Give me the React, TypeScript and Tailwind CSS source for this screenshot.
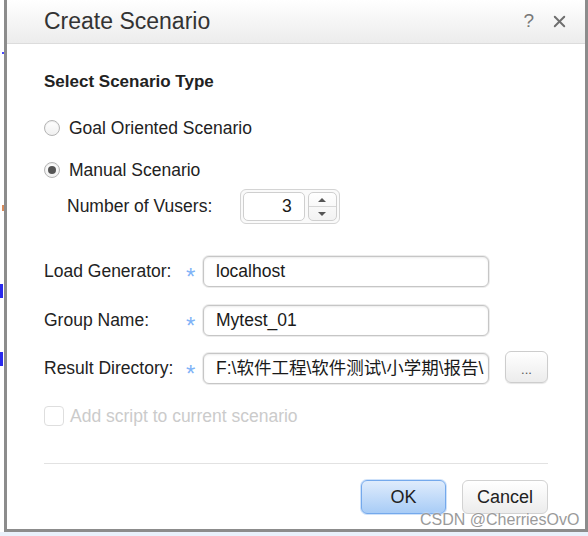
import { X } from "lucide-react";

const font = "font-['Liberation_Sans','Noto_Sans_CJK_SC',Arial,sans-serif]";

function Radio({ checked, label }: { checked?: boolean; label: string }) {
  return (
    <div className="flex h-6 items-center">
      <span className="flex h-[16px] w-[16px] shrink-0 items-center justify-center rounded-full border border-[#b4b4b4] bg-gradient-to-b from-white to-[#f0f0f0] shadow-[inset_0_1px_1px_rgba(0,0,0,0.08)]">
        {checked && <span className="h-[8px] w-[8px] rounded-full bg-[#555]" />}
      </span>
      <span className="ml-[9px] text-[17.5px] text-[#222]">{label}</span>
    </div>
  );
}

function Field({ label, children }: { label: string; children: React.ReactNode }) {
  return (
    <div className="flex h-[31px] items-center">
      <span className="w-[142px] shrink-0 text-[17.5px] text-[#222]">{label}</span>
      <span className="mt-[10px] w-[17px] shrink-0 text-[24px] leading-none text-[#7fb3f7]">*</span>
      <div className="flex h-[31px] w-[286px] shrink-0 items-center overflow-hidden whitespace-nowrap rounded-[6px] border border-[#c6c6c6] bg-white pl-[12px] text-[17.5px] text-[#1a1a1a] shadow-[inset_0_1px_2px_rgba(0,0,0,0.08),0_0_0_1px_#ececec]">
        {children}
      </div>
    </div>
  );
}

export default function App() {
  return (
    <div className={`relative flex h-[536px] w-[588px] flex-col bg-white ${font}`}>
      <div className="flex h-[532px]">
        {/* left page margin with bits of the page behind */}
        <div className="relative w-[4px]">
          <span className="absolute left-[2px] top-[52px] h-[2px] w-[2px] bg-[#4b4bff]" />
          <span className="absolute left-0 top-[284px] h-[14px] w-[3px] bg-[#2a2aee]" />
          <span className="absolute left-0 top-[352px] h-[14px] w-[3px] bg-[#2a2aee]" />
          <span className="absolute left-[2px] top-[205px] h-[6px] w-[2px] bg-[#d98a5a]" />
        </div>

        <div className="flex w-[584px] flex-col border-x-[3px] border-b-[3px] border-[#8c8c8c]">
          {/* title bar */}
          <div className="flex h-[44px] shrink-0 items-center border-b border-[#dcdcdc] bg-gradient-to-b from-white to-[#ececec] pl-[37px] pr-[16px]">
            <span className="text-[23px] text-[#333]">Create Scenario</span>
            <span className="ml-auto text-[19px] text-[#777]">?</span>
            <X className="ml-[16px] h-[19px] w-[19px] text-[#6e6e6e]" strokeWidth={2.4} />
          </div>

          <div className="flex flex-1 flex-col pl-[37px] pr-[37px]">
            <div className="mt-[28px] h-[20px] text-[17px] font-bold leading-[20px] text-[#222]">
              Select Scenario Type
            </div>

            <div className="mt-[24px]">
              <Radio label="Goal Oriented Scenario" />
            </div>
            <div className="mt-[18px]">
              <Radio checked label="Manual Scenario" />
            </div>

            <div className="mt-[7px] flex h-[35px] items-center pl-[23px]">
              <span className="w-[173px] shrink-0 text-[17.5px] text-[#222]">Number of Vusers:</span>
              <div className="flex h-[35px] w-[100px] shrink-0 items-center gap-[3px] rounded-[6px] border border-[#d4d4d4] bg-[#fafafa] p-[2px]">
                <div className="flex h-full w-[63px] items-center justify-end rounded-[5px] border border-[#cfcfcf] bg-white pr-[12px] text-[17.5px] text-[#1a1a1a]">
                  3
                </div>
                <div className="flex h-full w-[30px] flex-col overflow-hidden rounded-[5px] border border-[#cfcfcf] bg-gradient-to-b from-white to-[#f2f2f2]">
                  <div className="flex flex-1 items-center justify-center border-b border-[#d6d6d6]">
                    <span className="h-0 w-0 border-x-[4px] border-b-[4px] border-x-transparent border-b-[#555]" />
                  </div>
                  <div className="flex flex-1 items-center justify-center">
                    <span className="h-0 w-0 border-x-[4px] border-t-[4px] border-x-transparent border-t-[#555]" />
                  </div>
                </div>
              </div>
            </div>

            <div className="mt-[32px]">
              <Field label="Load Generator:">localhost</Field>
            </div>
            <div className="mt-[18px]">
              <Field label="Group Name:">Mytest_01</Field>
            </div>
            <div className="mt-[17px] flex items-center">
              <Field label="Result Directory:">F:\软件工程\软件测试\小学期\报告\</Field>
              <button className="-mt-[3px] ml-[16px] flex h-[32px] w-[43px] shrink-0 items-center justify-center rounded-[6px] border border-[#cdcdcd] bg-gradient-to-b from-white to-[#ececec] pt-[6px] text-[13px] text-[#555] shadow-[0_1px_1px_rgba(0,0,0,0.1)]">
                ...
              </button>
            </div>

            <div className="mt-[22px] flex h-[20px] items-center">
              <span className="h-[20px] w-[20px] shrink-0 rounded-[4px] border border-[#dedede] bg-white" />
              <span className="ml-[6px] text-[17.5px] text-[#cbcbcb]">Add script to current scenario</span>
            </div>

            <div className="mt-[37px] h-px bg-[#e2e2e2]" />

            <div className="mt-[16px] flex justify-end gap-[16px]">
              <button className="h-[34px] w-[85px] rounded-[6px] border border-[#74a9ec] bg-gradient-to-b from-[#dfecfc] to-[#a8ccf6] text-[18px] text-[#222] shadow-[0_0_0_1px_#cfe2fa]">
                OK
              </button>
              <button className="h-[34px] w-[86px] rounded-[6px] border border-[#d2d2d2] bg-gradient-to-b from-white to-[#ececec] text-[18px] text-[#222]">
                Cancel
              </button>
            </div>
          </div>
        </div>
      </div>
      <div className="h-[4px] bg-[#e9f1fb]" />

      {/* watermark */}
      <span className="absolute left-[420px] top-[511px] text-[16px] leading-[18px] text-[#9a9a9a] [text-shadow:0_0_2px_#fff]">
        CSDN @CherriesOvO
      </span>
    </div>
  );
}
